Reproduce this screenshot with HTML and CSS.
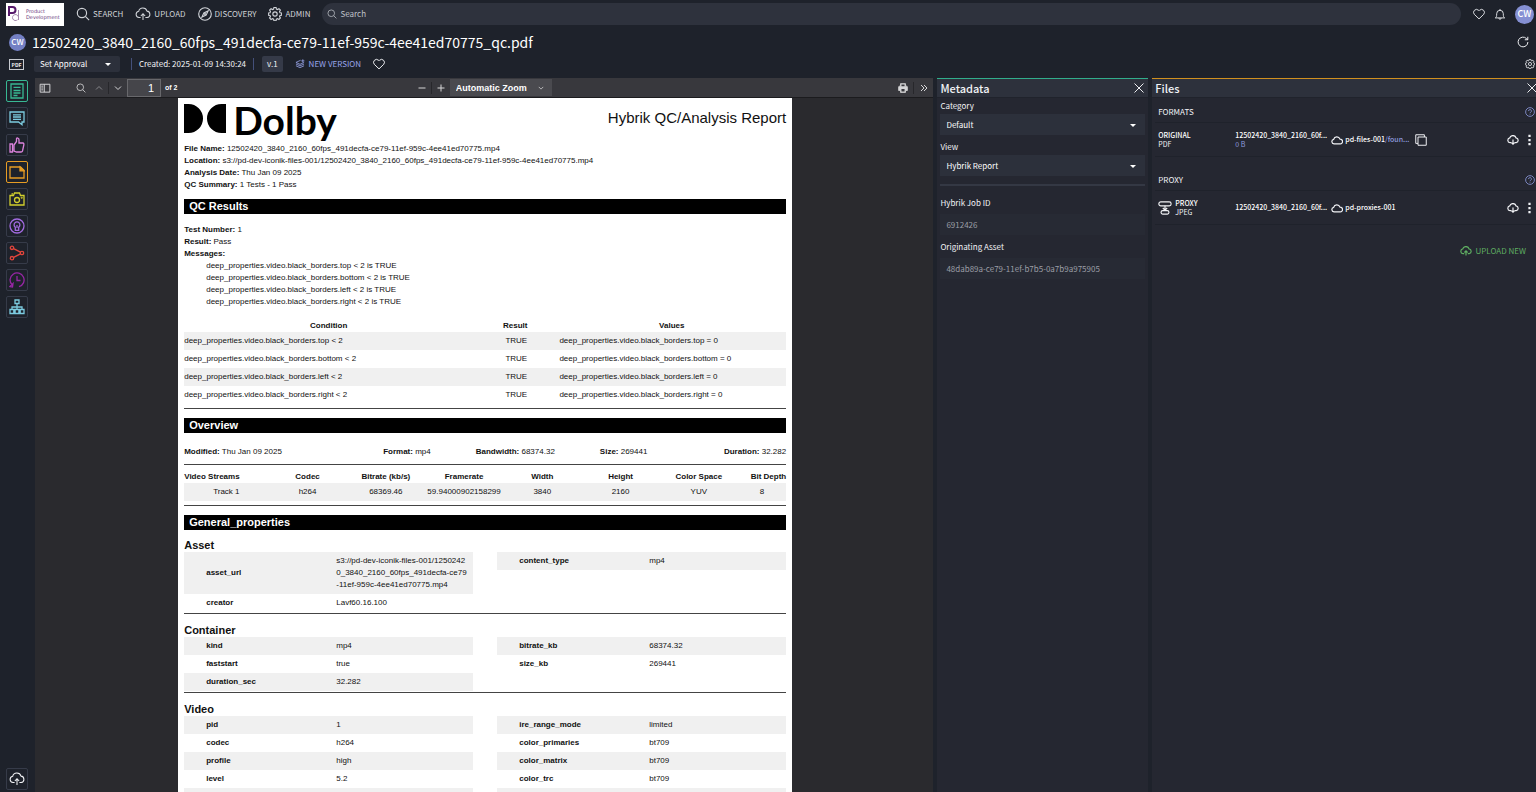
FILE: index.html
```html
<!DOCTYPE html>
<html lang="en">
<head>
<meta charset="utf-8">
<title>Asset viewer</title>
<link rel="stylesheet" href="styles.css">
</head>
<body>
<svg class="sprite" aria-hidden="true">
  <symbol id="search" viewBox="0 0 16 16"><circle cx="6.8" cy="6.8" r="5.3"/><path d="M10.7 10.7 15 15"/></symbol>
  <symbol id="cloud-up" viewBox="0 0 20 16"><path d="M7 12.5H5A4 4 0 0 1 4.6 4.6 5.4 5.4 0 0 1 15 4.4a4.1 4.1 0 0 1 .3 8.1H13M10 15.500V8M7.300 10.500 10 7.800l2.700 2.700"/></symbol>
  <symbol id="cloud-down" viewBox="0 0 20 16"><path d="M7 12.500H5A4 4 0 0 1 4.600 4.600 5.400 5.400 0 0 1 15 4.400a4.100 4.100 0 0 1 .3 8.100H13M10 7v8M7.300 12.300 10 15l2.700-2.700"/></symbol>
  <symbol id="cloud" viewBox="0 0 20 16"><path d="M5 14.500a3.800 3.800 0 0 1-.6-7.500A5.600 5.600 0 0 1 15 6.500a4 4 0 0 1 .5 8z"/></symbol>
  <symbol id="compass" viewBox="0 0 16 16"><circle cx="8" cy="8" r="7.200"/><path d="M11.500 4.500 9.300 9.300 4.500 11.500 6.700 6.700z"/><circle cx="8" cy="8" r=".6"/></symbol>
  <symbol id="gear" viewBox="0 0 16 16"><path d="M6.800 1h2.400l.4 1.900 1.300.5 1.600-1 1.700 1.700-1 1.600.5 1.300 1.900.4v2.400l-1.900.4-.5 1.300 1 1.600-1.700 1.700-1.600-1-1.300.5-.4 1.900H6.800l-.4-1.900-1.300-.5-1.600 1-1.700-1.700 1-1.600-.5-1.300L.4 9.800V7.400L2.300 7l.5-1.300-1-1.600 1.700-1.700 1.600 1 1.300-.5z" transform="translate(0 -.5)"/><circle cx="8" cy="8" r="2.500"/></symbol>
  <symbol id="heart" viewBox="0 0 16 16"><path d="M8 14.500 1.700 8.400A3.900 3.900 0 0 1 7.200 2.900L8 3.700l.8-.8a3.900 3.900 0 0 1 5.500 5.500z"/></symbol>
  <symbol id="bell" viewBox="0 0 16 16"><path d="M1.800 13.200c1.500-1 1.800-2 1.800-5.700a4.400 4.400 0 0 1 8.800 0c0 3.700.3 4.700 1.800 5.700zM6.500 13.500a1.500 1.500 0 0 0 3 0M8 3V1.300"/></symbol>
  <symbol id="reload" viewBox="0 0 16 16"><path d="M14.500 8A6.500 6.500 0 1 1 12.600 3.400l1.700 1.400M14.400 1v4h-4"/></symbol>
  <symbol id="layers" viewBox="0 0 16 16"><path d="M9 2 1.500 5.500 8 8.500l6.500-3M1.500 8 8 11l6.500-3M1.500 10.800 8 13.800l6.500-3M12.500.5v5M10 3h5"/></symbol>
  <symbol id="doc" viewBox="0 0 16 16"><path d="M2 1h12v14H2zM4.500 4.300h7M4.500 7.500h7M4.500 10h7M4.500 12.500h4"/></symbol>
  <symbol id="comment" viewBox="0 0 16 16"><path d="M1 2h14v10h-2v2.700L9.500 12H1zM4 4.800h8M4 7h8M4 9.300h8"/></symbol>
  <symbol id="thumb" viewBox="0 0 16 16"><path d="M1 7h2.500v8H1zM5 8l2.500-3.500V1.800c0-1.400 2.500-1 2.500 1V6h3.800c1.200 0 1.200 1.300 1 2L13.500 14c-.2.600-.7 1-1.500 1H7.500L5 14z"/></symbol>
  <symbol id="note" viewBox="0 0 16 16"><path d="M1 3h10.500L15 6.300V14H1z"/><path d="M11 3v3.800h4z" fill="currentColor"/></symbol>
  <symbol id="camera" viewBox="0 0 16 16"><path d="M1 4.500h3.500L5.500 2h5l1 2.500H15V14H1zM2.500 2.800h1.500"/><circle cx="8" cy="9" r="2.500"/><circle cx="12.700" cy="6.700" r=".4"/></symbol>
  <symbol id="keyhole" viewBox="0 0 16 16"><circle cx="8" cy="8" r="7"/><path d="M6.300 12.300V9.200a2.900 2.900 0 1 1 3.400 0v3.100zM8 7v3"/></symbol>
  <symbol id="share" viewBox="0 0 16 16"><circle cx="3" cy="2.800" r="1.700"/><circle cx="13" cy="8" r="1.700"/><circle cx="3" cy="13.200" r="1.700"/><path d="m4.600 3.700 6.900 3.500M4.600 12.300l6.900-3.500"/></symbol>
  <symbol id="history" viewBox="0 0 16 16"><path d="M10 14.700A7 7 0 1 0 3 12.800M8 4v4.500h3.500M1 14.500l2.500.5.500-3.500z"/></symbol>
  <symbol id="tree" viewBox="0 0 16 16"><path d="M6 1h4v3.500H6zM8 4.500v6M3 10.500V8h10v2.500M1 10.500h3.800v4H1zM6.100 10.500h3.800v4H6.100zM11.200 10.500H15v4h-3.800z"/></symbol>
  <symbol id="panel" viewBox="0 0 16 16"><path d="M1.500 3h13v10.500h-13zM7 3v10.500M3 5.500h2.500M3 8h2.500M3 10.500h2.500"/></symbol>
  <symbol id="up" viewBox="0 0 16 16"><path d="m2 11 6-6 6 6"/></symbol>
  <symbol id="down" viewBox="0 0 16 16"><path d="m2 5 6 6 6-6"/></symbol>
  <symbol id="minus" viewBox="0 0 16 16"><path d="M1 8h14"/></symbol>
  <symbol id="plus" viewBox="0 0 16 16"><path d="M1 8h14M8 1v14"/></symbol>
  <symbol id="more" viewBox="0 0 16 16"><path d="m2 2 6 6-6 6M8 2l6 6-6 6"/></symbol>
  <symbol id="printer" viewBox="0 0 16 16"><path d="M4 1h8v4h1.500c1 0 1.500.700 1.500 1.500V12h-3v3H4v-3H1V6.500C1 5.700 1.500 5 2.500 5H4z" fill="currentColor"/><path d="M5.500 9.500h5v4h-5zM5.500 2.500h5V5h-5z" fill="#38383d" stroke="none"/></symbol>
  <symbol id="close" viewBox="0 0 16 16"><path d="m2 2 12 12M14 2 2 14"/></symbol>
  <symbol id="help" viewBox="0 0 16 16"><circle cx="8" cy="8" r="7"/><path d="M5.700 6.500a2.300 2.300 0 1 1 3.300 2c-.8.400-1 .7-1 1.500M8 11.500v1"/></symbol>
  <symbol id="copy" viewBox="0 0 16 16"><path d="M4 4h11v11H4zM12.500 4V1H1v11.500h3"/></symbol>
  <symbol id="kebab" viewBox="0 0 4 16"><path d="M.5 1h3v3h-3zM.5 6.500h3v3h-3zM.5 12h3v3h-3z" fill="currentColor" stroke="none"/></symbol>
  <symbol id="proxy" viewBox="0 0 16 16"><rect x="1" y="1" width="14" height="4.500" rx="2.200"/><rect x="3.500" y="11" width="9" height="4" rx="1.800"/><path d="M8 5.500V10M5.500 8 8 10.500 10.500 8"/></symbol>
</svg>

<div class="app">
  <header class="topbar">
    <a class="brand" href="#" aria-label="Product Development">
      <svg class="brand-mark" viewBox="0 0 14 18"><path d="M2 11V2h3.500a3 3 0 0 1 0 6H2" fill="none" stroke="#561a6b" stroke-width="2"/><path d="M11.500 5v10M11.500 12.500a3 3 0 1 0-1 2.300" fill="none" stroke="#a58aae" stroke-width="1"/></svg>
      <span>Product<br>Development</span>
    </a>
    <nav class="nav">
      <a href="#"><svg class="icon i14"><use href="#search"/></svg>SEARCH</a>
      <a href="#"><svg class="icon cloud-lg"><use href="#cloud-up"/></svg>UPLOAD</a>
      <a href="#"><svg class="icon i14"><use href="#compass"/></svg>DISCOVERY</a>
      <a href="#"><svg class="icon i14"><use href="#gear"/></svg>ADMIN</a>
    </nav>
    <label class="search"><svg class="icon i10"><use href="#search"/></svg><input type="text" placeholder="Search" aria-label="Search"></label>
    <div class="top-actions">
      <button aria-label="Favorites"><svg class="icon i12"><use href="#heart"/></svg></button>
      <button aria-label="Notifications"><svg class="icon i12"><use href="#bell"/></svg></button>
      <button class="avatar avatar-lg">CW</button>
    </div>
  </header>

  <div class="title-row">
    <span class="avatar">CW</span>
    <h1>12502420_3840_2160_60fps_491decfa-ce79-11ef-959c-4ee41ed70775_qc.pdf</h1>
    <button aria-label="Reload"><svg class="icon i12"><use href="#reload"/></svg></button>
  </div>

  <div class="meta-row">
    <span class="pdf-tag">PDF</span>
    <span class="dropdown approval"><select aria-label="Approval status"><option>Set Approval</option></select></span>
    <span class="created">Created: 2025-01-09 14:30:24</span>
    <span class="version">v.1</span>
    <button class="new-version"><svg class="icon i10"><use href="#layers"/></svg>NEW VERSION</button>
    <button aria-label="Like"><svg class="icon i12"><use href="#heart"/></svg></button>
    <button class="settings" aria-label="Settings"><svg class="icon i10"><use href="#gear"/></svg></button>
  </div>

  <main class="workspace">
    <aside class="rail">
      <button class="green" aria-label="Metadata"><svg class="icon"><use href="#doc"/></svg></button>
      <button class="cyan" aria-label="Comments"><svg class="icon"><use href="#comment"/></svg></button>
      <button class="pink" aria-label="Approvals"><svg class="icon"><use href="#thumb"/></svg></button>
      <button class="orange" aria-label="Files"><svg class="icon"><use href="#note"/></svg></button>
      <button class="yellow" aria-label="Keyframes"><svg class="icon"><use href="#camera"/></svg></button>
      <button class="violet" aria-label="Access"><svg class="icon"><use href="#keyhole"/></svg></button>
      <button class="red" aria-label="Shares"><svg class="icon"><use href="#share"/></svg></button>
      <button class="purple" aria-label="History"><svg class="icon"><use href="#history"/></svg></button>
      <button class="cyan" aria-label="Relations"><svg class="icon"><use href="#tree"/></svg></button>
      <button class="last" aria-label="Upload"><svg class="icon"><use href="#cloud-up"/></svg></button>
    </aside>

    <section class="viewer">
      <div class="toolbar">
        <div class="tools">
          <button class="side-toggle" aria-label="Toggle sidebar"><svg class="icon i12"><use href="#panel"/></svg></button>
          <button class="find" aria-label="Find"><svg class="icon i10"><use href="#search"/></svg></button>
          <button class="dim" aria-label="Previous page"><svg class="icon i8"><use href="#up"/></svg></button>
          <i></i>
          <button aria-label="Next page"><svg class="icon i8"><use href="#down"/></svg></button>
          <input class="page-no" type="text" value="1" aria-label="Page"><b>of 2</b>
        </div>
        <div class="tools">
          <button aria-label="Zoom out"><svg class="icon i8"><use href="#minus"/></svg></button>
          <i></i>
          <button aria-label="Zoom in"><svg class="icon i8"><use href="#plus"/></svg></button>
          <span class="zoom"><select aria-label="Zoom"><option>Automatic Zoom</option></select><svg class="icon"><use href="#down"/></svg></span>
        </div>
        <div class="tools right">
          <button aria-label="Print"><svg class="icon i10"><use href="#printer"/></svg></button>
          <i></i>
          <button aria-label="Tools"><svg class="icon i8"><use href="#more"/></svg></button>
        </div>
      </div>

      <div class="canvas">
        <article class="page">
          <div class="page-head">
            <div class="dolby"><svg viewBox="0 0 42 29"><path d="M0 0h4.500a14.500 14.500 0 0 1 0 29H0zM42 0h-4.500a14.500 14.500 0 0 0 0 29H42z"/></svg><span>Dolby</span></div>
            <div class="report">Hybrik QC/Analysis Report</div>
          </div>
          <div class="lines">
            <p><b>File Name:</b> 12502420_3840_2160_60fps_491decfa-ce79-11ef-959c-4ee41ed70775.mp4</p>
            <p><b>Location:</b> s3://pd-dev-iconik-files-001/12502420_3840_2160_60fps_491decfa-ce79-11ef-959c-4ee41ed70775.mp4</p>
            <p><b>Analysis Date:</b> Thu Jan 09 2025</p>
            <p><b>QC Summary:</b> 1 Tests - 1 Pass</p>
          </div>
          <h2>QC Results</h2>
          <div class="lines results">
            <p><b>Test Number:</b> 1</p>
            <p><b>Result:</b> Pass</p>
            <p><b>Messages:</b></p>
            <p class="msg">deep_properties.video.black_borders.top &lt; 2 is TRUE</p>
            <p class="msg">deep_properties.video.black_borders.bottom &lt; 2 is TRUE</p>
            <p class="msg">deep_properties.video.black_borders.left &lt; 2 is TRUE</p>
            <p class="msg">deep_properties.video.black_borders.right &lt; 2 is TRUE</p>
          </div>
          <table class="conditions">
            <thead><tr><th>Condition</th><th>Result</th><th>Values</th></tr></thead>
            <tbody>
              <tr><td>deep_properties.video.black_borders.top &lt; 2</td><td>TRUE</td><td>deep_properties.video.black_borders.top = 0</td></tr>
              <tr><td>deep_properties.video.black_borders.bottom &lt; 2</td><td>TRUE</td><td>deep_properties.video.black_borders.bottom = 0</td></tr>
              <tr><td>deep_properties.video.black_borders.left &lt; 2</td><td>TRUE</td><td>deep_properties.video.black_borders.left = 0</td></tr>
              <tr><td>deep_properties.video.black_borders.right &lt; 2</td><td>TRUE</td><td>deep_properties.video.black_borders.right = 0</td></tr>
            </tbody>
          </table>
          <hr>
          <h2>Overview</h2>
          <div class="overview">
            <p><b>Modified:</b> Thu Jan 09 2025</p>
            <p><b>Format:</b> mp4</p>
            <p><b>Bandwidth:</b> 68374.32</p>
            <p><b>Size:</b> 269441</p>
            <p><b>Duration:</b> 32.282</p>
          </div>
          <hr>
          <table class="streams">
            <thead><tr><th>Video Streams</th><th>Codec</th><th>Bitrate (kb/s)</th><th>Framerate</th><th>Width</th><th>Height</th><th>Color Space</th><th>Bit Depth</th></tr></thead>
            <tbody><tr><td>Track 1</td><td>h264</td><td>68369.46</td><td>59.94000902158299</td><td>3840</td><td>2160</td><td>YUV</td><td>8</td></tr></tbody>
          </table>
          <hr>
          <h2>General_properties</h2>
          <h3 class="first">Asset</h3>
          <div class="pair">
            <table class="props">
              <tr><th>asset_url</th><td>s3://pd-dev-iconik-files-001/1250242<br>0_3840_2160_60fps_491decfa-ce79<br>-11ef-959c-4ee41ed70775.mp4</td></tr>
              <tr><th>creator</th><td>Lavf60.16.100</td></tr>
            </table>
            <table class="props">
              <tr><th>content_type</th><td>mp4</td></tr>
            </table>
          </div>
          <h3>Container</h3>
          <div class="pair">
            <table class="props">
              <tr><th>kind</th><td>mp4</td></tr>
              <tr><th>faststart</th><td>true</td></tr>
              <tr><th>duration_sec</th><td>32.282</td></tr>
            </table>
            <table class="props">
              <tr><th>bitrate_kb</th><td>68374.32</td></tr>
              <tr><th>size_kb</th><td>269441</td></tr>
            </table>
          </div>
          <h3>Video</h3>
          <div class="pair">
            <table class="props">
              <tr><th>pid</th><td>1</td></tr>
              <tr><th>codec</th><td>h264</td></tr>
              <tr><th>profile</th><td>high</td></tr>
              <tr><th>level</th><td>5.2</td></tr>
              <tr><th></th><td></td></tr>
            </table>
            <table class="props">
              <tr><th>ire_range_mode</th><td>limited</td></tr>
              <tr><th>color_primaries</th><td>bt709</td></tr>
              <tr><th>color_matrix</th><td>bt709</td></tr>
              <tr><th>color_trc</th><td>bt709</td></tr>
              <tr><th></th><td></td></tr>
            </table>
          </div>
        </article>
      </div>
    </section>

    <section class="panel metadata">
      <header><h2>Metadata</h2><button aria-label="Close metadata"><svg class="icon i12"><use href="#close"/></svg></button></header>
      <form class="form">
        <label for="category">Category</label>
        <span class="dropdown"><select id="category"><option>Default</option></select></span>
        <label for="view">View</label>
        <span class="dropdown"><select id="view"><option>Hybrik Report</option></select></span>
        <div class="rule"></div>
        <label for="job">Hybrik Job ID</label>
        <input id="job" type="text" value="6912426" readonly>
        <label for="origin">Originating Asset</label>
        <input id="origin" type="text" value="48dab89a-ce79-11ef-b7b5-0a7b9a975905" readonly>
      </form>
    </section>

    <section class="panel files">
      <header><h2>Files</h2><button aria-label="Close files"><svg class="icon i12"><use href="#close"/></svg></button></header>
      <div class="group-head"><h3>FORMATS</h3><button aria-label="Help on formats"><svg class="icon i10"><use href="#help"/></svg></button></div>
      <div class="file">
        <div class="kind"><p><b>ORIGINAL</b><span>PDF</span></p></div>
        <div class="name"><b>12502420_3840_2160_60f...</b><span>0 B</span></div>
        <div class="store"><svg class="icon cloud-sm"><use href="#cloud"/></svg><b>pd-files-001<a href="#">/foun...</a></b><button aria-label="Copy path"><svg class="icon i12"><use href="#copy"/></svg></button></div>
        <button aria-label="Download"><svg class="icon cloud-sm"><use href="#cloud-down"/></svg></button>
        <button aria-label="More"><svg class="icon dots"><use href="#kebab"/></svg></button>
      </div>
      <div class="group-head"><h3>PROXY</h3><button aria-label="Help on proxies"><svg class="icon i10"><use href="#help"/></svg></button></div>
      <div class="file">
        <div class="kind"><svg class="icon i14"><use href="#proxy"/></svg><p><b>PROXY</b><span>JPEG</span></p></div>
        <div class="name"><b>12502420_3840_2160_60f...</b></div>
        <div class="store"><svg class="icon cloud-sm"><use href="#cloud"/></svg><b>pd-proxies-001</b></div>
        <button aria-label="Download"><svg class="icon cloud-sm"><use href="#cloud-down"/></svg></button>
        <button aria-label="More"><svg class="icon dots"><use href="#kebab"/></svg></button>
      </div>
      <button class="upload-new"><svg class="icon cloud-sm"><use href="#cloud-up"/></svg>UPLOAD NEW</button>
    </section>
  </main>
</div>
</body>
</html>
```
FILE: styles.css
```css
* { box-sizing: border-box; }
body {
  margin: 0;
  background: #1e222b;
  color: #f2f3f6;
  font: 400 8px/12px "Noto Sans CJK JP", "Open Sans", sans-serif;
}
h1, h2, h3, p { margin: 0; font-weight: 400; }
button, input, select { font: inherit; color: inherit; margin: 0; }
button { display: inline-flex; align-items: center; justify-content: center; padding: 0; border: 0; background: none; }
a { color: inherit; text-decoration: none; }
select, input { appearance: none; border: 0; border-radius: 0; background: none; outline: 0; min-width: 0; }
.sprite { position: absolute; width: 0; height: 0; }
.icon { flex: none; fill: none; stroke: currentColor; stroke-width: 1.3; width: 16px; height: 16px; }
.i8 { width: 8px; height: 8px; stroke-width: 2; }
.i10 { width: 10px; height: 10px; }
.i12 { width: 12px; height: 12px; }
.i14 { width: 14px; height: 14px; }
.cloud-lg { width: 16px; height: 14px; }
.cloud-sm { width: 12px; height: 10px; stroke-width: 2; }
.dots { width: 3px; height: 12px; }

.app { display: flex; flex-direction: column; height: 100vh; overflow: hidden; }

/* top navigation */
.topbar { display: flex; align-items: center; height: 28px; padding: 0 2px 0 6px; }
.brand { display: flex; align-items: center; gap: 5px; width: 58px; height: 23px; padding-left: 1px; background: #fff; color: #6a3b7c; font: 5px/6px "DejaVu Sans", sans-serif; }
.brand-mark { width: 14px; height: 18px; flex: none; }
.nav { display: flex; gap: 12px; margin: 0 12px; color: #d0d3d8; }
.nav a { display: flex; align-items: center; gap: 3px; }
.search { display: flex; flex: 1; align-items: center; gap: 3px; height: 22px; padding: 0 5px; border-radius: 11px; background: #2e323d; color: #b4b7be; }
.search input { flex: 1; padding: 0; }
.search input::placeholder { color: #c0c3c9; opacity: 1; }
.top-actions { display: flex; align-items: center; gap: 9px; margin-left: 12px; color: #dfe1e5; }
.avatar { display: inline-flex; flex: none; align-items: center; justify-content: center; width: 17px; height: 17px; border-radius: 50%; background: #7480c4; color: #fff; font-size: 8px; font-weight: 500; }
.avatar-lg { width: 19px; height: 19px; background: #8590d3; font-size: 9px; }

/* asset title and status */
.title-row { display: flex; align-items: center; gap: 6px; height: 28px; padding: 0 7px 0 9px; }
.title-row h1 { flex: 1; font-size: 14px; line-height: 20px; color: #fff; }
.meta-row { display: flex; align-items: center; height: 16px; margin-bottom: 6px; padding-left: 9px; }
.pdf-tag { width: 15px; border: 1px solid #c8cbd1; font-size: 5px; font-weight: 700; line-height: 9px; text-align: center; }
.dropdown { position: relative; display: flex; background: #2c303b; border-radius: 2px; }
.dropdown::after { content: ""; position: absolute; right: 9px; top: 50%; margin-top: -1px; border: 3px solid transparent; border-top-color: #fff; border-bottom: 0; pointer-events: none; }
.dropdown select { width: 100%; padding: 0 6px; color: #fff; }
.approval { width: 86px; height: 16px; margin-left: 10px; }
.created { margin: 0 8px 0 11px; padding: 0 7px; border: solid #44507a; border-width: 0 1px; }
.version { padding: 2px 5px; border-radius: 2px; background: #353a48; }
.new-version { gap: 4px; margin: 0 12px; color: #99a5ea; }
.settings { margin-left: auto; margin-right: 1px; }

/* workspace columns */
.workspace { display: grid; flex: 1; min-height: 0; grid-template-columns: 31px 899fr 211fr 384fr; gap: 4px; }
.rail { display: flex; flex-direction: column; gap: 5px; padding: 2px 0 2px 6px; }
.rail button { width: 22px; height: 22px; border: 1px solid #363b49; border-radius: 2px; }
.rail .green { color: #38b893; border-color: #38b893; }
.rail .orange { color: #e69c24; border-color: #e69c24; }
.cyan { color: #7ccbe0; }
.pink { color: #dc83dd; }
.yellow { color: #d2cf2e; }
.violet { color: #a26be0; }
.red { color: #e3453c; }
.purple { color: #9726a5; }
.rail .last { margin-top: auto; }

/* document viewer */
.viewer { display: flex; flex-direction: column; min-width: 0; min-height: 0; background: #2a2a2e; }
.toolbar { display: grid; grid-template-columns: 1fr auto 1fr; height: 20px; flex: none; background: #38383d; border-bottom: 1px solid #1b1b1e; color: #d6d6d8; font-family: "Liberation Sans", Arial, sans-serif; }
.tools { display: flex; align-items: center; gap: 4px; }
.tools i { width: 1px; height: 12px; background: #27272b; }
.tools button { min-width: 10px; }
.tools .side-toggle { margin: 0 21px 0 4px; }
.tools .find { margin-right: 4px; }
.tools b { font-size: 7px; color: #fff; }
.dim { opacity: .5; }
.page-no { width: 34px; height: 18px; padding: 0 6px; border: 1px solid #68686c; background: #45454a; font-size: 11px; text-align: right; color: #fff; }
.zoom { position: relative; display: flex; align-items: center; }
.zoom select { width: 102px; height: 17px; padding: 0 6px; background: #4a4a4f; color: #fff; font-size: 9px; font-weight: 700; }
.zoom .icon { position: absolute; right: 8px; width: 6px; height: 6px; stroke-width: 2; pointer-events: none; }
.right { justify-content: flex-end; padding-right: 4px; gap: 5px; }
.canvas { flex: 1; min-height: 0; overflow: hidden; padding-left: 2px; }

/* report page */
.page { max-width: 614px; min-height: 100%; margin: 0 auto; padding: 6px 6px 0; background: #fff; color: #111; font: 8px/12px "Liberation Sans", Arial, sans-serif; }
.page-head { display: flex; justify-content: space-between; height: 39px; }
.dolby { display: flex; align-items: flex-start; gap: 7px; }
.dolby svg { width: 42px; height: 29px; }
.dolby span { font: 700 39px/32px Lato, sans-serif; color: #000; }
.report { padding-top: 4px; font-size: 15px; line-height: 20px; }
.page h2 { margin: 8px 0; padding: 0 5px; background: #000; color: #fff; font-size: 11px; font-weight: 700; line-height: 15px; }
.msg { padding-left: 22px; }
.results { padding: 2px 0 12px; }
.page table { width: 100%; border-collapse: collapse; table-layout: fixed; }
.page th { padding: 0; white-space: nowrap; }
.page td { padding: 3px 0; text-align: center; }
.conditions tbody tr:nth-child(odd), .streams tbody tr, .props tr:nth-child(odd) { background: #f0f0f0; }
.conditions th:nth-child(1) { width: 48%; }
.conditions th:nth-child(2) { width: 14%; }
.conditions td:nth-child(1), .conditions td:nth-child(3) { text-align: left; }
.conditions td:nth-child(n + 2) { padding-left: 2px; }
.page hr { height: 1px; margin: 4px 0 9px; border: 0; background: #444; }
.overview { display: grid; grid-template-columns: 28% 18% 18% 18% 18%; padding: 5px 0 2px; text-align: center; }
.overview p:first-child { text-align: left; }
.overview p:last-child { text-align: right; }
.overview + hr { margin-bottom: 6px; }
.streams th { width: 13%; }
.streams th:first-child { width: 14%; text-align: left; }
.streams th:last-child { width: 8%; text-align: right; }
.page h3 { margin: 10px 0 0; font-size: 11px; font-weight: 700; line-height: 13px; }
.page .first { margin-top: 9px; }
.pair { display: grid; grid-template-columns: 1fr 1fr; gap: 24px; align-items: start; padding-bottom: 1px; border-bottom: 1px solid #444; }
.props th { width: 45%; padding-left: 22px; text-align: left; }
.page .props td { height: 18px; padding-left: 22px; text-align: left; white-space: nowrap; }

/* side panels */
.panel { min-width: 0; background: #252731; border-top: 1px solid #31ad8b; }
.panel header { display: flex; align-items: center; justify-content: space-between; height: 19px; padding: 0 3px; background: #2d313c; border-bottom: 1px solid #20232c; }
.panel header h2 { font-size: 11px; line-height: 18px; font-weight: 500; }
.form { display: flex; flex-direction: column; padding: 0 3px; }
.form label { line-height: 12px; margin-top: 2px; }
.form .dropdown { height: 21px; margin: 2px 0 4px; border-radius: 0; }
.form input { height: 21px; padding: 0 6px; margin: 5px 0 4px; background: #272a34; color: #9b9ea6; }
.rule { height: 2px; margin: 4px 0 9px; background: #343844; }
.files { margin-right: -5px; border-color: #d0901f; }
.group-head { display: flex; align-items: center; justify-content: space-between; height: 24px; padding: 4px 6px 0; }
.group-head h3 { font-size: 8px; }
.group-head button { color: #8e9ade; }
.file { display: grid; grid-template-columns: 77px 96px 1fr 12px 20px; align-items: center; height: 35px; margin: 0 0 9px 3px; padding: 0 2px 0 3px; border: solid #1f222b; border-width: 1px 0; font-size: 7px; line-height: 9px; }
.file b { font-weight: 500; color: #fff; }
.file span { display: block; }
.kind { display: flex; align-items: center; gap: 3px; }
.kind b { display: block; }
.file .name span, .store a { color: #8e9ade; }
.store { display: flex; align-items: center; gap: 2px; }
.store button { margin-left: 4px; }
.upload-new { display: flex; gap: 4px; margin: 20px 15px 0 auto; color: #5fae62; }
```
